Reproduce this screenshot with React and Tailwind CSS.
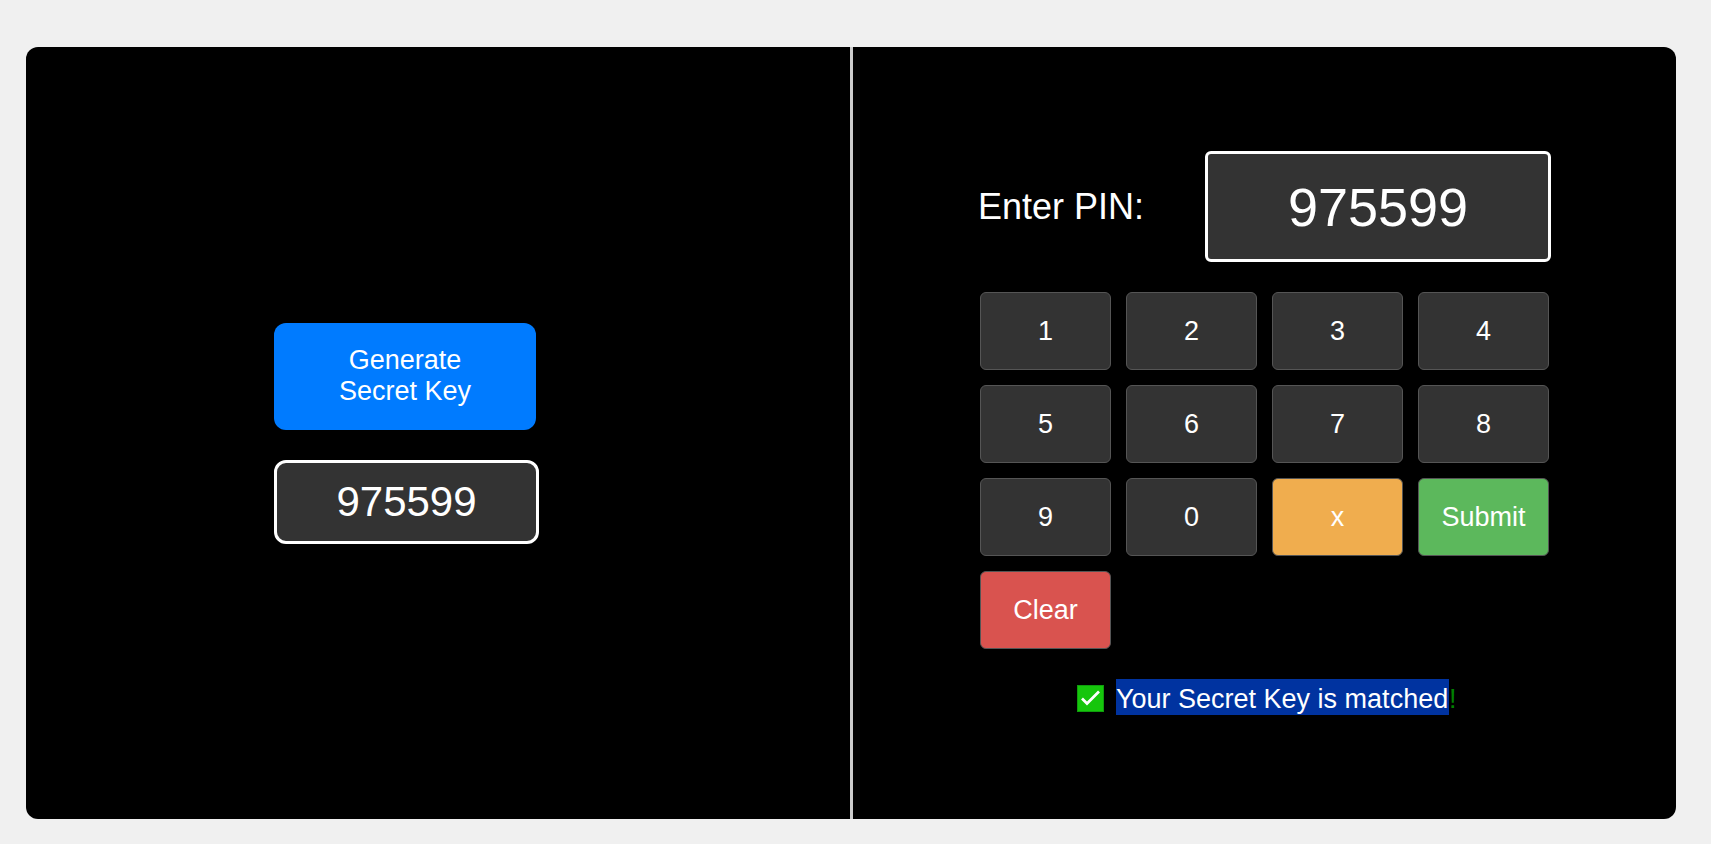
const base =
  "h-[78px] w-[131px] rounded-[6px] border border-[#555] text-center text-[27px] leading-[31px] text-white";

const keys = [
  ...["1", "2", "3", "4", "5", "6", "7", "8", "9", "0"].map((label) => ({ label, color: "bg-[#333]" })),
  { label: "x", color: "bg-[#f0ad4e]" },
  { label: "Submit", color: "bg-[#5cb85c]" },
  { label: "Clear", color: "bg-[#d9534f]" },
];

function CheckMark() {
  return (
    <svg width="27" height="27" viewBox="0 0 27 27" className="mt-[6px] shrink-0">
      <rect width="27" height="27" fill="#0f9d0c" />
      <rect x="1" y="1" width="25" height="25" fill="#16c60c" />
      <path d="M5 13.5 L10 18.5 L22 6.5" fill="none" stroke="#fff" strokeWidth="2.7" />
    </svg>
  );
}

export default function App() {
  return (
    <div className="h-[844px] w-[1711px] overflow-hidden bg-[#f0f0f0] pt-[47px] pl-[26px] font-['Liberation_Sans',Arial,sans-serif]">
      <main className="flex h-[772px] w-[1650px] overflow-hidden rounded-[12px] bg-black text-white">
        <section className="flex w-[827px] flex-col items-start border-r-[3px] border-[#ccc] pt-[276px] pl-[248px]">
          <button className="h-[107px] w-[262px] rounded-[12px] bg-[#007bff] pb-[2px] text-[27px] leading-[31px]">
            Generate
            <br />
            Secret Key
          </button>
          <div className="mt-[30px] flex h-[84px] w-[265px] items-center justify-center rounded-[12px] border-[3px] border-white bg-[#333] text-[42px] leading-[48px]">
            975599
          </div>
        </section>
        <section className="flex flex-1 flex-col pt-[104px] pl-[125px]">
          <div className="flex h-[111px] w-[573px] items-center justify-between">
            <label className="text-[36px] leading-[41px]">Enter PIN:</label>
            <div className="flex h-[111px] w-[346px] items-center justify-center rounded-[6px] border-[3px] border-white bg-[#333] text-[54px] leading-[62px]">
              975599
            </div>
          </div>
          <div className="mt-[30px] ml-[2px] grid w-[569px] grid-cols-4 gap-[15px]">
            {keys.map(({ label, color }) => (
              <button key={label} className={`${base} ${color}`}>
                {label}
              </button>
            ))}
          </div>
          <p className="mt-[30px] ml-[99px] flex h-[36px] text-[27px] leading-[40px] text-[#008000]">
            <CheckMark />
            <span className="ml-[12px] h-[36px] w-[333px] bg-[#0033a0] whitespace-nowrap text-white">
              Your Secret Key is matched
            </span>
            !
          </p>
        </section>
      </main>
    </div>
  );
}
